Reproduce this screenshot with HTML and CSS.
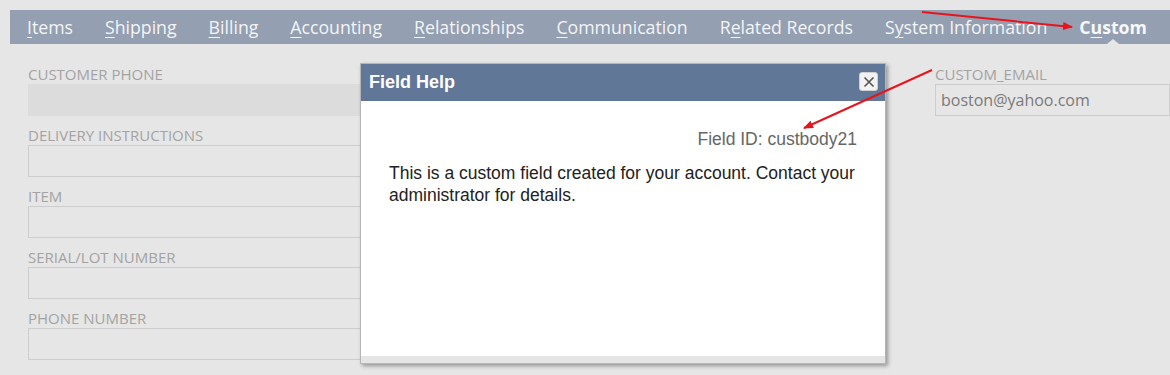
FILE: index.html
```html
<!DOCTYPE html>
<html lang="en">
<head>
    <meta charset="UTF-8">
    <title>Custom Fields</title>
    <link rel="stylesheet" href="styles.css">
</head>
<body>
    <nav class="tabs">
        <a class="tab"><u>I</u>tems</a>
        <a class="tab"><u>S</u>hipping</a>
        <a class="tab"><u>B</u>illing</a>
        <a class="tab"><u>A</u>ccounting</a>
        <a class="tab"><u>R</u>elationships</a>
        <a class="tab"><u>C</u>ommunication</a>
        <a class="tab">R<u>e</u>lated Records</a>
        <a class="tab">S<u>y</u>stem Information</a>
        <a class="tab active">C<u>u</u>stom</a>
    </nav>

    <div class="form">
        <div class="column left">
            <div class="field">
                <label>Customer Phone</label>
                <div class="input disabled"></div>
            </div>
            <div class="field">
                <label>Delivery Instructions</label>
                <div class="input"></div>
            </div>
            <div class="field">
                <label>Item</label>
                <div class="input"></div>
            </div>
            <div class="field">
                <label>Serial/Lot Number</label>
                <div class="input"></div>
            </div>
            <div class="field">
                <label>Phone Number</label>
                <div class="input"></div>
            </div>
            <div class="field">
                <label>Oooh Employees</label>
            </div>
        </div>
        <div class="column right">
            <div class="field">
                <label>Custom_Email</label>
                <div class="input">boston@yahoo.com</div>
            </div>
        </div>
    </div>

    <div class="dialog">
        <div class="dialog-head">
            <span>Field Help</span>
            <button class="close">
                <svg width="12" height="12" viewBox="0 0 12 12"><path d="M1.5 1.5L10.5 10.5M10.5 1.5L1.5 10.5" stroke="#555" stroke-width="1.6"/></svg>
            </button>
        </div>
        <div class="dialog-body">
            <p class="field-id">Field ID: custbody21</p>
            <p class="help">This is a custom field created for your account. Contact your administrator for details.</p>
        </div>
        <div class="dialog-foot"></div>
    </div>

    <svg class="arrows" width="1170" height="375" viewBox="0 0 1170 375">
        <defs>
            <marker id="head" markerWidth="10" markerHeight="8" refX="9" refY="4" orient="auto" markerUnits="userSpaceOnUse">
                <path d="M0 0L10 4L0 8z" fill="#e8141c"/>
            </marker>
        </defs>
        <line x1="922" y1="12" x2="1072" y2="27" stroke="#e8141c" stroke-width="2" marker-end="url(#head)"/>
        <line x1="932" y1="70" x2="804" y2="128" stroke="#e8141c" stroke-width="2" marker-end="url(#head)"/>
    </svg>
</body>
</html>
```

FILE: styles.css
```css
body {
    margin: 0;
    background: #e6e6e6;
    font-family: 'Open Sans', sans-serif;
    overflow: hidden;
    height: 375px;
    position: relative;
}

.tabs {
    display: flex;
    align-items: center;
    gap: 32px;
    margin: 10px 0 0 10px;
    height: 34px;
    padding-left: 17px;
    background: #949fb1;
}

.tab {
    position: relative;
    font-size: 17.7px;
    color: #f3f5f7;
    white-space: nowrap;
}

.tab u {
    text-underline-offset: 3px;
    text-decoration-thickness: 1px;
}

.tab.active {
    font-weight: bold;
    color: #f6f8fa;
}

.tab.active::after {
    content: "";
    position: absolute;
    left: 50%;
    bottom: -5px;
    margin-left: -6px;
    border-left: 6px solid transparent;
    border-right: 6px solid transparent;
    border-bottom: 5px solid #e6e6e6;
}

.form {
    display: flex;
    padding: 20px 0 0 28px;
}

.column.left {
    width: 420px;
}

.column.right {
    margin-left: 487px;
    flex: 1;
}

.field {
    margin-bottom: 9px;
}

.field label {
    display: block;
    font-size: 15px;
    line-height: 20px;
    color: #a3a3a3;
    text-transform: uppercase;
}

.input {
    border: 1px solid #cdcdcd;
    box-sizing: border-box;
    height: 32px;
    padding: 0 5px;
    font-size: 16px;
    line-height: 30px;
    color: #7a7a7a;
}

.input.disabled {
    background: #dcdcdc;
    border-color: #dcdcdc;
}

.dialog {
    position: absolute;
    left: 360px;
    top: 63px;
    width: 524px;
    height: 299px;
    display: flex;
    flex-direction: column;
    background: #fff;
    border: 1px solid #b5b5b5;
    box-shadow: 2px 2px 4px rgba(0, 0, 0, 0.35);
    font-family: 'Liberation Sans', Arial, sans-serif;
}

.dialog-head {
    height: 37px;
    background: #607798;
    display: flex;
    align-items: center;
    justify-content: space-between;
    padding: 0 7px 0 8px;
    color: #fff;
    font-weight: bold;
    font-size: 18px;
}

.close {
    width: 19px;
    height: 19px;
    padding: 0;
    border: 1px solid #d0d0d0;
    border-radius: 3px;
    background: #f2f2f2;
    display: flex;
    align-items: center;
    justify-content: center;
    margin-top: -2px;
}

.dialog-body {
    flex: 1;
    padding: 0 28px;
}

.field-id {
    margin: 28px 0 0;
    text-align: right;
    font-size: 17.5px;
    color: #666;
}

.help {
    margin: 12px 0 0;
    font-size: 17.5px;
    line-height: 22px;
    color: #222;
}

.dialog-foot {
    height: 7px;
    background: #e5e5e5;
}

.arrows {
    position: absolute;
    left: 0;
    top: 0;
    pointer-events: none;
}
```
